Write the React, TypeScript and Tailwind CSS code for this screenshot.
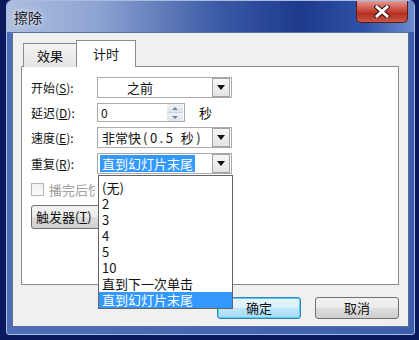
const listItems = ['(无)', '2', '3', '4', '5', '10', '直到下一次单击', '直到幻灯片末尾'];

function Arrow() {
  return (
    <div className="flex h-[19px] w-[18px] items-center justify-center border border-[#a3a3a3] bg-[linear-gradient(#f6f6f6,#e4e4e4)]">
      <svg width="8" height="5" viewBox="0 0 8 5">
        <path d="M0 0h8L4 5z" fill="#111" />
      </svg>
    </div>
  );
}

function Select({ children, className = '' }: { children: React.ReactNode; className?: string }) {
  return (
    <div className={'flex h-[21px] w-[135px] items-center justify-between border border-[#a7abb0] bg-white pr-px ' + className}>
      {children}
      <Arrow />
    </div>
  );
}

function Label({ text, k }: { text: string; k: string }) {
  return (
    <div className="w-[66px] text-[12px] text-[#111]">
      {text}(<span className="underline">{k}</span>):
    </div>
  );
}

export default function App() {
  return (
    <div className="relative h-[340px] w-[419px] overflow-hidden bg-[#0b1a5c] font-['Noto_Sans_CJK_SC',sans-serif]">
      {/* window */}
      <div className="ml-[6px] flex h-[335px] w-[409px] flex-col rounded-t-[6px] rounded-b-[3px] border border-[#a9bde3] bg-[linear-gradient(90deg,#4e6fb6,#3c5fad)]">
        {/* title bar */}
        <div className="flex h-[31px] items-start justify-between rounded-t-[5px] bg-[linear-gradient(90deg,#aebfdf_0%,#8ea4d2_22%,#3b5aa6_52%,#1d3a8c_72%,#2f52a8_88%,#6d8ccc_100%)]">
          <div className="pl-[7px] pt-[8px] text-[14px] leading-[16px] text-[#1a1a1a] [text-shadow:0_0_6px_#fff]">擦除</div>
          <div className="mr-[6px] flex h-[22px] w-[52px] items-center justify-center rounded-b-[5px] border border-t-0 border-[#5a1c18] bg-[linear-gradient(#e39a91,#c9493e_45%,#b2301f_60%,#c8584a)]">
            <svg width="16" height="13" viewBox="0 0 16 13">
              <path d="M3 2l10 9M13 2L3 11" stroke="#3b1410" strokeWidth="5" strokeLinecap="square" />
              <path d="M3 2l10 9M13 2L3 11" stroke="#fff" strokeWidth="3" strokeLinecap="square" />
            </svg>
          </div>
        </div>

        {/* client */}
        <div className="mx-[5px] flex h-[295px] flex-col border border-[#5b6f99] bg-[#f0f0f0] pl-[8px] pr-[9px] pt-[7px]">
          {/* tabs */}
          <div className="relative z-10 -mb-px flex h-[27px] items-end pl-[2px]">
            <div className="flex h-[24px] w-[54px] items-center justify-center border border-b-0 border-[#898c95] bg-[linear-gradient(#f4f4f4,#e3e3e3)] text-[13px] text-[#111]">
              效果
            </div>
            <div className="-ml-px flex h-[27px] w-[60px] items-start justify-center border border-b-0 border-[#898c95] bg-white pt-[3px] text-[13px] text-[#111]">
              计时
            </div>
          </div>

          {/* panel */}
          <div className="flex h-[219px] flex-col border border-[#898c95] bg-white pl-[9px] pt-[10px]">
            <div className="flex items-center">
              <Label text="开始" k="S" />
              <Select>
                <span className="pl-[29px] text-[13px] text-[#111]">之前</span>
              </Select>
            </div>
            <div className="mt-[4px] flex h-[21px] items-center">
              <Label text="延迟" k="D" />
              <div className="flex h-[19px] w-[88px] items-center justify-between border border-[#a7abb0] bg-white pl-[3px] pr-px">
                <span className="text-[12px] text-[#111]">0</span>
                <div className="flex h-[17px] w-[16px] flex-col">
                  <div className="flex flex-1 items-center justify-center bg-[linear-gradient(#f2f4f7,#dde3ea)]">
                    <svg width="6" height="3" viewBox="0 0 6 3"><path d="M0 3h6L3 0z" fill="#6f8aa8" /></svg>
                  </div>
                  <div className="flex flex-1 items-center justify-center border-t border-[#c8d0da] bg-[linear-gradient(#eef1f5,#dfe5ec)]">
                    <svg width="6" height="3" viewBox="0 0 6 3"><path d="M0 0h6L3 3z" fill="#6f8aa8" /></svg>
                  </div>
                </div>
              </div>
              <span className="ml-[14px] text-[13px] text-[#111]">秒</span>
            </div>
            <div className="mt-[4px] flex items-center">
              <Label text="速度" k="E" />
              <Select>
                <span className="whitespace-nowrap pl-[4px] text-[13px] text-[#111]">
                  非常快<span className="ml-[2px] tracking-[2.5px]">(0.5 秒)</span>
                </span>
              </Select>
            </div>
            <div className="mt-[5px] flex items-center">
              <Label text="重复" k="R" />
              <Select>
                <span className="ml-[2px] bg-[#3399ff] px-[2px] text-[13px] leading-[17px] text-white">直到幻灯片末尾</span>
              </Select>
            </div>
            <div className="mt-[6px] flex items-center gap-[5px]">
              <div className="h-[13px] w-[13px] border border-[#b5b5b5] bg-[linear-gradient(#f0f0f0,#fbfbfb)]" />
              <span className="w-[46px] overflow-hidden whitespace-nowrap text-[13px] text-[#a0a0a0]">播完后快退</span>
            </div>
            <div className="mt-[5px] flex h-[24px] w-[100px] items-center rounded-[3px] border border-[#707070] bg-[linear-gradient(#f2f2f2_0%,#ebebeb_50%,#dddddd_51%,#cfcfcf_100%)] pl-[4px] text-[13px] text-[#111]">
              触发器(<span className="underline">T</span>)
            </div>
          </div>

          {/* buttons */}
          <div className="mt-[12px] flex justify-end gap-[14px]">
            <div className="flex h-[22px] w-[84px] items-center justify-center rounded-[3px] border border-[#3c7fb1] bg-[linear-gradient(#eaf6fd_0%,#d9f0fc_50%,#bee6fd_51%,#a7d9f5_100%)] text-[13px] text-[#111] shadow-[inset_0_0_0_1px_#48d2fb]">
              确定
            </div>
            <div className="flex h-[22px] w-[84px] items-center justify-center rounded-[3px] border border-[#707070] bg-[linear-gradient(#f2f2f2_0%,#ebebeb_50%,#dddddd_51%,#cfcfcf_100%)] text-[13px] text-[#111]">
              取消
            </div>
          </div>
        </div>
      </div>

      {/* dropdown list */}
      <div className="absolute left-[98px] top-[175px] w-[135px] border border-[#646464] bg-white pt-[4px]">
        {listItems.map((item, i) => (
          <div
            key={item}
            className={
              'flex h-[16px] items-center pl-[3px] text-[13px] leading-[16px] ' +
              (i === listItems.length - 1 ? 'bg-[#3399ff] text-white' : 'text-[#111]')
            }
          >
            {item}
          </div>
        ))}
      </div>
    </div>
  );
}
